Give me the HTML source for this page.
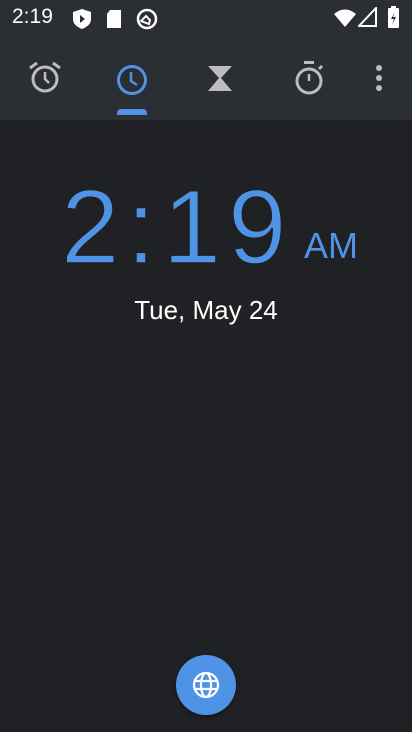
<!DOCTYPE html>
<html><head><style>
body{margin:0;width:412px;height:732px;background:#202124;overflow:hidden;font-family:"Liberation Sans",sans-serif;position:relative}
.top{position:absolute;left:0;top:0;width:412px;height:120px;background:#2b2e33}
.sb{position:absolute;top:5px;left:12px;color:#fff;font-size:21px}
.abs{position:absolute}
</style></head><body>
<div class="top"></div>
<div class="sb">2:19</div>
<svg class="abs" style="left:70px;top:8px" width="24" height="22" viewBox="0 0 24 22"><path d="M12 1 L21 4 V11 C21 16 17 19 12 21 C7 19 3 16 3 11 V4 Z" fill="#fff"/><path d="M10 7 L15 11 L10 15Z" fill="#2b2e33"/></svg>
<svg class="abs" style="left:105px;top:9px" width="18" height="20"><path d="M5 1 H16 V19 H2 V5 Z" fill="#fff"/></svg>
<svg class="abs" style="left:135px;top:8px" width="24" height="22"><circle cx="12" cy="11" r="9" fill="none" stroke="#fff" stroke-width="2.5"/><path d="M6 13 L11 8 L15 12 L14 16 Z" fill="none" stroke="#fff" stroke-width="2"/></svg>
<svg class="abs" style="left:333px;top:8px" width="24" height="20"><path d="M1 6 Q12 -3 23 6 L12 19 Z" fill="#fff"/></svg>
<svg class="abs" style="left:358px;top:7px" width="20" height="20"><path d="M18 1 V19 H1 Z" fill="none" stroke="#fff" stroke-width="2"/></svg>
<svg class="abs" style="left:387px;top:5px" width="14" height="24"><rect x="4" y="1" width="5" height="3" fill="#fff"/><rect x="1" y="3" width="11" height="20" rx="1" fill="#fff"/><path d="M8 7 L4 14 H7 L5 20 L9 12 H6 Z" fill="#2b2e33"/></svg>
<svg class="abs" style="left:26px;top:60px" width="38" height="36" viewBox="0 0 38 36"><circle cx="19" cy="19" r="12" fill="none" stroke="#bdbdbd" stroke-width="3"/><path d="M19 12 V19 L23 23" fill="none" stroke="#bdbdbd" stroke-width="2.5"/><path d="M4 8 L11 3 M34 8 L27 3" stroke="#bdbdbd" stroke-width="3"/></svg>
<svg class="abs" style="left:114px;top:62px" width="36" height="36"><circle cx="18" cy="18" r="13.5" fill="none" stroke="#4f93e6" stroke-width="3"/><path d="M17 10 V19 L23 23" fill="none" stroke="#4f93e6" stroke-width="2.5"/></svg>
<div class="abs" style="left:117px;top:109px;width:30px;height:6px;background:#4f93e6;border-radius:4px 4px 0 0"></div>
<svg class="abs" style="left:206px;top:64px" width="28" height="28"><path d="M2 2 H26 L15 14 L26 27 H2 L13 14 Z" fill="#bdbdbd"/></svg>
<svg class="abs" style="left:292px;top:60px" width="34" height="36"><rect x="12" y="1" width="10" height="3" fill="#bdbdbd"/><circle cx="17" cy="21" r="12" fill="none" stroke="#bdbdbd" stroke-width="3"/><path d="M17 14 V21" stroke="#bdbdbd" stroke-width="2.5"/><path d="M27 9 L30 6" stroke="#bdbdbd" stroke-width="3"/></svg>
<svg class="abs" style="left:372px;top:64px" width="14" height="30"><circle cx="7" cy="4" r="3" fill="#bdbdbd"/><circle cx="7" cy="14" r="3" fill="#bdbdbd"/><circle cx="7" cy="24" r="3" fill="#bdbdbd"/></svg>
<div class="abs" style="left:61px;top:168px;font-size:105px;color:#4f93e6;letter-spacing:7px;line-height:120px;white-space:nowrap;-webkit-text-stroke:1.5px #202124">2:19</div>
<div class="abs" style="left:304px;top:226px;font-size:36px;color:#4f93e6;line-height:40px">AM</div>
<div class="abs" style="left:0;width:412px;top:294px;text-align:center;font-size:26px;color:#fff;line-height:32px">Tue, May 24</div>
<div class="abs" style="left:176px;top:655px;width:60px;height:60px;border-radius:50%;background:#4f93e6;box-shadow:0 2px 4px rgba(0,0,0,.4)"></div>
<svg class="abs" style="left:192px;top:671px" width="28" height="28" viewBox="0 0 28 28"><g fill="none" stroke="#fff" stroke-width="2.2"><circle cx="14" cy="14" r="12"/><ellipse cx="14" cy="14" rx="5" ry="12"/><path d="M2 10 H26 M2 18 H26"/></g></svg>
</body></html>
